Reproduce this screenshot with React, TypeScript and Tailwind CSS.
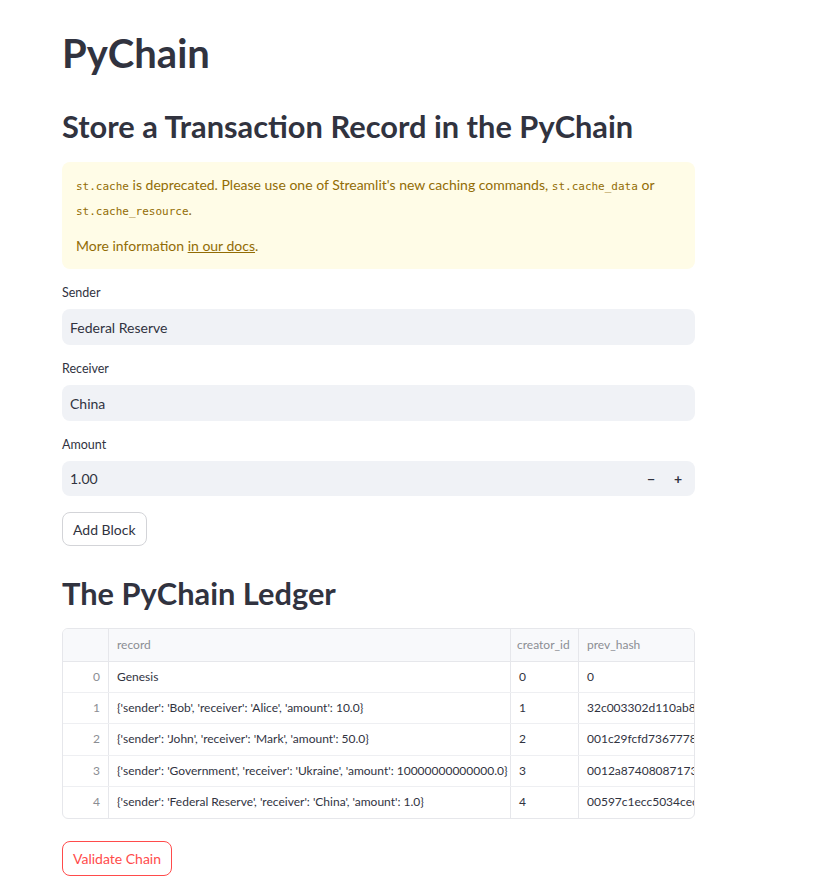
const rows = [
  { i: 0, record: "Genesis", creator: "0", hash: "0" },
  { i: 1, record: "{'sender': 'Bob', 'receiver': 'Alice', 'amount': 10.0}", creator: "1", hash: "32c003302d110ab8d" },
  { i: 2, record: "{'sender': 'John', 'receiver': 'Mark', 'amount': 50.0}", creator: "2", hash: "001c29fcfd7367778fc" },
  { i: 3, record: "{'sender': 'Government', 'receiver': 'Ukraine', 'amount': 10000000000000.0}", creator: "3", hash: "0012a874080871733" },
  { i: 4, record: "{'sender': 'Federal Reserve', 'receiver': 'China', 'amount': 1.0}", creator: "4", hash: "00597c1ecc5034cece" },
];

function Field({ label, value }: { label: string; value: string }) {
  return (
    <div className="flex flex-col">
      <label className="text-[12.5px] leading-4 mb-[8px]">{label}</label>
      <div className="h-[36px] bg-[#f0f2f6] rounded-lg px-2 flex items-center text-[14px]">{value}</div>
    </div>
  );
}

export default function App() {
  return (
    <div className="min-h-screen bg-white text-[#31333f] font-['Lato',sans-serif]">
      <div className="w-[633px] ml-[62px] pt-[28px] pb-8">
        <h1 className="text-[40px] font-bold leading-[50px]">PyChain</h1>
        <h2 className="text-[30.8px] font-bold leading-[40px] mt-[29px]">Store a Transaction Record in the PyChain</h2>

        <div className="mt-[15px] bg-[#fffce7] rounded-lg px-[14px] pt-[11px] pb-[12px] text-[14px] text-[#926c05]">
          <p className="leading-[23px]">
            <code className="font-['DejaVu_Sans_Mono',monospace] text-[11px]">st.cache</code> is deprecated. Please use one of Streamlit's new caching commands,{" "}
            <code className="font-['DejaVu_Sans_Mono',monospace] text-[11px]">st.cache_data</code> or{" "}
            <code className="font-['DejaVu_Sans_Mono',monospace] text-[11px]">st.cache_resource</code>.
          </p>
          <p className="leading-[23px] mt-[11px]">
            More information <span className="underline">in our docs</span>.
          </p>
        </div>

        <div className="mt-[16px] flex flex-col gap-[16px]">
          <Field label="Sender" value="Federal Reserve" />
          <Field label="Receiver" value="China" />
          <div className="flex flex-col">
            <label className="text-[12.5px] leading-4 mb-[8px]">Amount</label>
            <div className="h-[35px] bg-[#f0f2f6] rounded-lg pl-2 pr-[10px] flex items-center text-[14px]">
              <span className="flex-1">1.00</span>
              <span className="w-[16px] text-center font-bold">−</span>
              <span className="w-[14px] ml-[12px] text-center font-bold">+</span>
            </div>
          </div>
        </div>

        <button className="mt-[16px] h-[34px] px-[10px] border border-[#d3d4d8] rounded-lg text-[14px] bg-white">Add Block</button>

        <h2 className="text-[30.8px] font-bold leading-[40px] mt-[28px]">The PyChain Ledger</h2>

        <div className="mt-[14px] border border-[#e6e7eb] rounded-md overflow-hidden text-[12px]">
          <div className="flex h-[33px] bg-[#f8f9fb] border-b border-[#e6e7eb] text-[#8b8d93]">
            <div className="w-[46px] border-r border-[#e6e7eb]"></div>
            <div className="w-[402px] border-r border-[#e6e7eb] px-2 flex items-center">record</div>
            <div className="w-[68px] border-r border-[#e6e7eb] px-[6px] flex items-center">creator_id</div>
            <div className="flex-1 px-2 flex items-center whitespace-nowrap overflow-hidden">prev_hash</div>
          </div>
          {rows.map((r, idx) => (
            <div key={r.i} className={"flex h-[31.2px] " + (idx < rows.length - 1 ? "border-b border-[#eeeff2]" : "")}>
              <div className="w-[46px] border-r border-[#e6e7eb] pr-[8px] flex items-center justify-end text-[#8b8d93]">{r.i}</div>
              <div className="w-[402px] border-r border-[#e6e7eb] px-2 flex items-center whitespace-nowrap overflow-hidden">{r.record}</div>
              <div className="w-[68px] border-r border-[#e6e7eb] px-2 flex items-center">{r.creator}</div>
              <div className="flex-1 px-2 flex items-center whitespace-nowrap overflow-hidden">{r.hash}</div>
            </div>
          ))}
        </div>

        <button className="mt-[22px] h-[35px] px-[10px] border border-[#ff4b4b] text-[#ff4b4b] rounded-lg text-[14px] bg-white">Validate Chain</button>
      </div>
    </div>
  );
}
